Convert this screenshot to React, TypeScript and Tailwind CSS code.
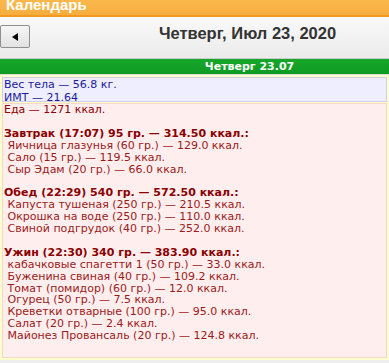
const meals = [
  {
    title: "Завтрак (17:07) 95 гр. — 314.50 ккал.:",
    items: [
      "Яичница глазунья (60 гр.) — 129.0 ккал.",
      "Сало (15 гр.) — 119.5 ккал.",
      "Сыр Эдам (20 гр.) — 66.0 ккал.",
    ],
  },
  {
    title: "Обед (22:29) 540 гр. — 572.50 ккал.:",
    items: [
      "Капуста тушеная (250 гр.) — 210.5 ккал.",
      "Окрошка на воде (250 гр.) — 110.0 ккал.",
      "Свиной подгрудок (40 гр.) — 252.0 ккал.",
    ],
  },
  {
    title: "Ужин (22:30) 340 гр. — 383.90 ккал.:",
    items: [
      "кабачковые спагетти 1 (50 гр.) — 33.0 ккал.",
      "Буженина свиная (40 гр.) — 109.2 ккал.",
      "Томат (помидор) (60 гр.) — 12.0 ккал.",
      "Огурец (50 гр.) — 7.5 ккал.",
      "Креветки отварные (100 гр.) — 95.0 ккал.",
      "Салат (20 гр.) — 2.4 ккал.",
      "Майонез Провансаль (20 гр.) — 124.8 ккал.",
    ],
  },
];

export default function App() {
  return (
    <div className="w-[389px] h-[363px] overflow-hidden bg-[#eeeeee] font-['DejaVu_Sans',sans-serif]">
      <div className="h-[17px] overflow-hidden bg-gradient-to-b from-[#fbb84c] to-[#f7ad3e] border-b-2 border-[#f39a1e] px-[6px]">
        <div className="-mt-[4px] text-white font-bold text-[15px] leading-[17px] font-['Liberation_Sans',sans-serif]">
          Календарь
        </div>
      </div>
      <div className="h-[42px] bg-gradient-to-b from-[#f9f9f9] to-[#ebebeb] flex items-start border-b border-[#cccccc]">
        <button className="mt-[8px] w-[30px] h-[23px] border border-[#8e8e8e] rounded-[2px] bg-gradient-to-b from-[#f6f6f6] to-[#e2e2e2] flex items-center justify-center">
          <span className="block w-0 h-0 border-y-[4px] border-y-transparent border-r-[6px] border-r-black" />
        </button>
        <div className="flex-1 mt-[6px] text-center pl-[76px] text-[16.5px] leading-[20px] font-bold text-[#333333] font-['Liberation_Sans',sans-serif]">
          Четверг, Июл 23, 2020
        </div>
      </div>
      <div className="h-[15px] bg-gradient-to-b from-[#16a72a] to-[#0e9b22] text-white font-bold text-[11px] leading-[15px] text-center pl-[110px]">
        Четверг 23.07
      </div>
      <div className="bg-[#ffffcc] p-[2px] border-t border-[#dddddd]">
        <div className="h-[25px] bg-[#eeeeff] border border-[#d0d0ee] px-[1px] text-[#1a1a9a] text-[11px] leading-[13px]">
          <div>Вес тела — 56.8 кг.</div>
          <div>ИМТ — 21.64</div>
        </div>
        <div className="mt-[1px] bg-[#ffeeee] border border-[#f5d8c8] px-[1px] pb-[15px] text-[11px] leading-[11.9px] text-[#9a1a1a] whitespace-pre">
          <div className="text-[#8b0000]">Еда — 1271 ккал.</div>
          {meals.map((m) => (
            <div key={m.title}>
              <div className="h-[11.9px]" />
              <div className="font-bold text-[#8b0000]">{m.title}</div>
              {m.items.map((it) => (
                <div key={it}> {it}</div>
              ))}
            </div>
          ))}
        </div>
      </div>
    </div>
  );
}
